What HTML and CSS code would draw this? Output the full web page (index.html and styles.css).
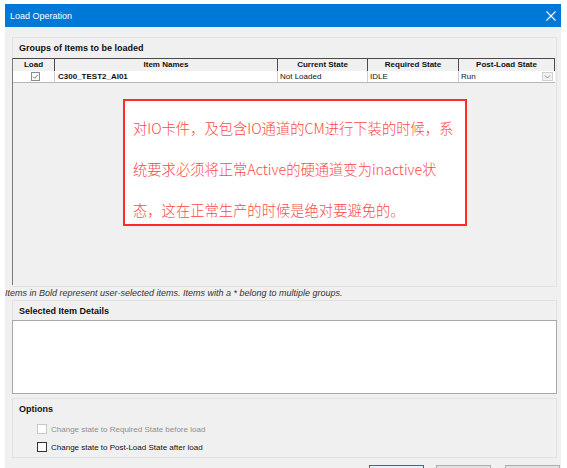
FILE: index.html
```
<!DOCTYPE html>
<html>
<head>
<meta charset="utf-8">
<title>Load Operation</title>
<link rel="stylesheet" href="styles.css">
</head>
<body>
<div class="dialog">
  <header class="titlebar">
    <span class="title">Load Operation</span>
    <svg class="close" width="10" height="10" viewBox="0 0 10 10"><path d="M0.5 0.5L9.5 9.5M9.5 0.5L0.5 9.5" stroke="#fff" stroke-width="1.1" fill="none"/></svg>
  </header>
  <main class="content">
    <section class="panel groups">
      <div class="panel-head">Groups of Items to be loaded</div>
      <div class="list">
        <div class="grid head">
          <div class="hc">Load</div>
          <div class="hc">Item Names</div>
          <div class="hc">Current State</div>
          <div class="hc">Required State</div>
          <div class="hc">Post-Load State</div>
        </div>
        <div class="grid row">
          <div class="dc c-load"><svg width="9" height="9" viewBox="0 0 9 9"><rect x="0.5" y="0.5" width="8" height="8" fill="#fff" stroke="#8c8c8c"/><path d="M2 4.5L3.8 6.3L7 2.6" stroke="#7a7a7a" stroke-width="1" fill="none"/></svg></div>
          <div class="dc name">C300_TEST2_AI01</div>
          <div class="dc">Not Loaded</div>
          <div class="dc">IDLE</div>
          <div class="dc c-post"><span>Run</span><svg width="11" height="9" viewBox="0 0 11 9"><rect x="0.5" y="0.5" width="10" height="8" fill="#f2f2f2" stroke="#d0d0d0"/><path d="M3 3.5L5.5 6L8 3.5" stroke="#8a8a8a" stroke-width="1" fill="none"/></svg></div>
        </div>
        <div class="callout">
          <span class="line">对IO卡件，及包含IO通道的CM进行下装的时候，系</span>
          <span class="line">统要求必须将正常Active的硬通道变为inactive状</span>
          <span class="line">态，这在正常生产的时候是绝对要避免的。</span>
        </div>
      </div>
    </section>
    <p class="hint">Items in Bold represent user-selected items. Items with a * belong to multiple groups.</p>
    <section class="panel details">
      <div class="panel-head">Selected Item Details</div>
      <div class="textbox"></div>
    </section>
    <section class="panel options">
      <div class="panel-head">Options</div>
      <div class="opts">
        <label class="opt disabled"><span class="cb"></span>Change state to Required State before load</label>
        <label class="opt"><span class="cb"></span>Change state to Post-Load State after load</label>
      </div>
    </section>
    <div class="buttons">
      <button class="btn default" aria-label="OK"></button>
      <button class="btn" aria-label="Cancel"></button>
      <button class="btn" aria-label="Help"></button>
    </div>
  </main>
</div>
</body>
</html>
```
FILE: styles.css
```
* { box-sizing: border-box; }
html, body { margin: 0; background: #fff; }
body { font-family: "Liberation Sans", Arial, sans-serif; font-size: 8px; color: #000; }

.dialog {
  margin: 4px 0 0 5px;
  width: 556px;
  height: 464px;
  background: #f0f0f0;
  overflow: hidden;
  display: flex;
  flex-direction: column;
}
.titlebar {
  height: 23px;
  flex: none;
  background: #0078d7;
  color: #fff;
  display: flex;
  align-items: center;
  justify-content: space-between;
  padding: 0 5px;
  font-size: 9px;
}
.close { display: block; }

.content {
  padding: 10px 4px 0 7px;
  display: flex;
  flex-direction: column;
}
.panel { border: 1px solid #e2e2e2; }
.panel-head {
  height: 20px;
  display: flex;
  align-items: center;
  padding-left: 6px;
  font-weight: bold;
  font-size: 9px;
  color: #111;
}

.groups { height: 250px; display: flex; flex-direction: column; }
.list {
  position: relative;
  flex: 1;
  margin: 0 1px 1px -1px;
  border-left: 1px solid #7c7c7c;
}
.grid {
  display: grid;
  grid-template-columns: 42px 223px 90px 91px 1fr;
}
.head { height: 13px; border-top: 1px solid #4a4a4a; }
.hc {
  border-right: 1px solid #4a4a4a;
  font-weight: bold;
  text-align: center;
  line-height: 12px;
  color: #111;
}
.row { height: 12px; background: #fff; border-bottom: 1px solid #b8b8b8; }
.dc {
  border-right: 1px solid #cfcfcf;
  padding-left: 2px;
  line-height: 11px;
  white-space: nowrap;
  color: #111;
}
.dc.name { font-weight: bold; padding-left: 3px; }
.c-load { display: flex; align-items: center; justify-content: center; padding-left: 4px; }
.c-load svg { display: block; }
.c-post { display: flex; align-items: center; justify-content: space-between; padding-right: 2px; border-right: none; }
.c-post svg { display: block; }

.callout {
  position: absolute;
  left: 110px;
  top: 41px;
  width: 344px;
  height: 127px;
  border: 2px solid #ff2b2b;
  background: #fff;
  padding: 6px 0 0 8px;
  color: #ff4848;
  font-family: "Noto Sans CJK SC", "Noto Sans", sans-serif;
  font-size: 14.3px;
  font-weight: 300;
  line-height: 41px;
}
.line { display: block; white-space: nowrap; }

.hint {
  margin: 0 0 0 -7px;
  height: 13px;
  line-height: 13px;
  font-style: italic;
  font-size: 9px;
  color: #333;
  white-space: nowrap;
}

.details { height: 94px; display: flex; flex-direction: column; }
.details .panel-head { height: 19px; }
.textbox {
  flex: 1;
  margin: 0 -1px -1px;
  border: 1px solid #a8a8a8;
  background: #fff;
}

.options { margin-top: 4px; height: 60px; }
.options .panel-head { height: 19px; }
.opts { padding: 2px 0 0 24px; }
.opt {
  display: flex;
  align-items: center;
  height: 18px;
  font-size: 8px;
  color: #111;
}
.cb {
  width: 10px;
  height: 10px;
  border: 1px solid #333;
  background: #fff;
  margin-right: 4px;
  flex: none;
}
.opt.disabled { color: #8f8f8f; }
.opt.disabled .cb { border-color: #c8c8c8; }

.buttons {
  margin-top: 7px;
  display: flex;
  justify-content: flex-end;
  margin-right: -3px;
}
.btn {
  width: 55px;
  height: 23px;
  margin-left: 12px;
  border: 1px solid #adadad;
  background: #e1e1e1;
  padding: 0;
}
.btn.default { border-color: #0078d7; background: #e5f1fb; }
.btn:last-child { margin-left: 14px; }
```
